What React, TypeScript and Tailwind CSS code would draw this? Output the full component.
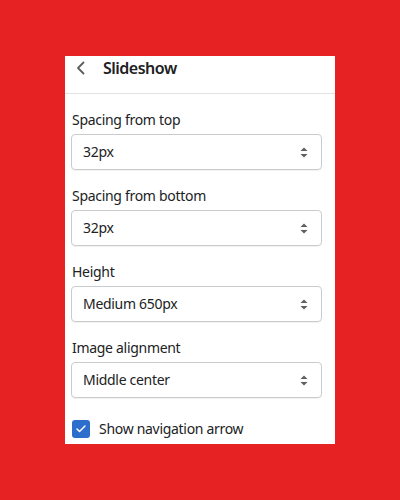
import { Check } from "lucide-react";

const fields = [
  { label: "Spacing from top", value: "32px" },
  { label: "Spacing from bottom", value: "32px" },
  { label: "Height", value: "Medium 650px" },
  { label: "Image alignment", value: "Middle center" },
];

function UpDown() {
  return (
    <svg width="8" height="11" viewBox="0 0 8 11" aria-hidden="true">
      <path d="M4 0.5 L7.5 4 H0.5 Z" fill="#5c5f62" />
      <path d="M4 10.5 L7.5 7 H0.5 Z" fill="#5c5f62" />
    </svg>
  );
}

export default function App() {
  return (
    <div
      className="w-[400px] h-[500px] bg-[#e62222] pt-[56px] pl-[65px]"
      style={{ fontFamily: '"Noto Sans", "Open Sans", sans-serif' }}
    >
      <div className="w-[270px] h-[388px] bg-white text-[#202223] tracking-[-0.3px]">
        {/* Header */}
        <div className="h-[38px] border-b border-[#e1e3e5] flex items-start">
          <div className="flex items-center h-[24px] pl-[6px]">
            <svg width="20" height="20" viewBox="0 0 20 20" aria-hidden="true">
              <path
                d="M12.5 4.5 L7 10 L12.5 15.5"
                fill="none"
                stroke="#5c5f62"
                strokeWidth="1.8"
                strokeLinecap="round"
                strokeLinejoin="round"
              />
            </svg>
            <span className="ml-[12px] text-[16px] font-semibold leading-[24px] tracking-[-0.5px]">Slideshow</span>
          </div>
        </div>

        {/* Fields */}
        <div className="pt-[16px] px-[6px]">
          {fields.map((f) => (
            <div key={f.label} className="mb-[16px]">
              <div className="text-[14px] leading-[20px] mb-[4px] pl-px">{f.label}</div>
              <div className="h-[36px] w-[251px] border border-[#c9cccf] rounded-[4px] flex items-center justify-between pl-[11px] pr-[13px] shadow-[0_1px_0_rgba(0,0,0,0.05)]">
                <span className="text-[14px] leading-[20px]">{f.value}</span>
                <UpDown />
              </div>
            </div>
          ))}

          <label className="flex items-center mt-[21px] pl-px">
            <span className="w-[18px] h-[18px] rounded-[3px] bg-[#2c6ecb] flex items-center justify-center">
              <Check className="w-[12px] h-[12px] text-white" strokeWidth={3} />
            </span>
            <span className="ml-[9px] text-[14px] leading-[20px]">Show navigation arrow</span>
          </label>
        </div>
      </div>
    </div>
  );
}
